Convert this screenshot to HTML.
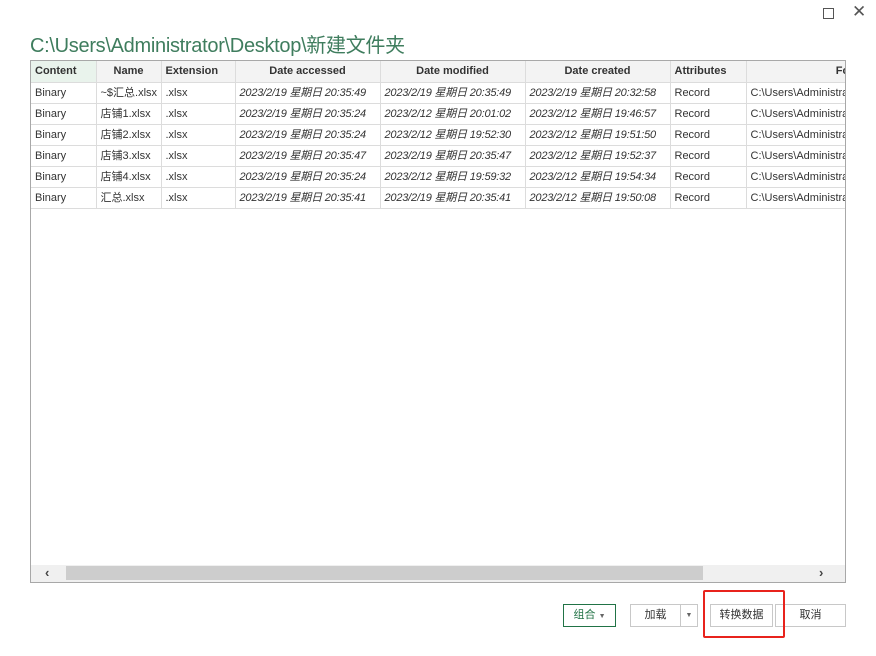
<!DOCTYPE html>
<html><head><meta charset="utf-8"><style>
body{margin:0;width:876px;height:656px;background:#fff;position:relative;overflow:hidden;font-family:"Liberation Sans","Noto Sans CJK SC",sans-serif;}
.t{position:absolute;left:30px;top:29px;font-size:20px;color:#3f7d5e;letter-spacing:-0.3px;white-space:nowrap}
.box{position:absolute;left:30px;top:60px;width:814px;height:521px;border:1px solid #a8a8a8;overflow:hidden}
table{border-collapse:collapse;font-size:11px;color:#333;table-layout:fixed;position:absolute;left:0;top:0;width:955px}
tr{height:21px}
td,th{border:1px solid #dcdcdc;padding:0 4px;white-space:nowrap;overflow:hidden;vertical-align:middle;line-height:20px}
th{background:#f3f3f3;font-weight:bold;text-align:center;border-top:none}
th.l{text-align:left}
td.i{font-style:italic;letter-spacing:-0.2px}
.sb{position:absolute;left:0;bottom:0;width:814px;height:17px;background:#f0f0f0}
.th{position:absolute;left:35px;top:1px;width:637px;height:14px;background:#cdcdcd}
.btn{position:absolute;top:604px;height:21px;border:1px solid #c8c8c8;font-size:11px;color:#333;text-align:center;line-height:21px;background:#fff}
</style></head><body>
<div style="position:absolute;left:823px;top:8px;width:9px;height:9px;border:1px solid #555"></div>
<div style="position:absolute;left:852px;top:2px;font-size:17px;color:#555">✕</div>
<div class="t">C:\Users\Administrator\Desktop\新建文件夹</div>
<div class="box">
<table>
<colgroup><col style="width:65px"><col style="width:65px"><col style="width:74px"><col style="width:145px"><col style="width:145px"><col style="width:145px"><col style="width:76px"><col style="width:240px"></colgroup>
<tr><th class="l" style="background:#e9f3ec;border-left:none">Content</th><th>Name</th><th class="l">Extension</th><th>Date accessed</th><th>Date modified</th><th>Date created</th><th class="l">Attributes</th><th>Folder Path</th></tr>
<tr><td style="border-left:none">Binary</td><td>~$汇总.xlsx</td><td>.xlsx</td><td class="i">2023/2/19 星期日 20:35:49</td><td class="i">2023/2/19 星期日 20:35:49</td><td class="i">2023/2/19 星期日 20:32:58</td><td>Record</td><td>C:\Users\Administrator</td></tr>
<tr><td style="border-left:none">Binary</td><td>店铺1.xlsx</td><td>.xlsx</td><td class="i">2023/2/19 星期日 20:35:24</td><td class="i">2023/2/12 星期日 20:01:02</td><td class="i">2023/2/12 星期日 19:46:57</td><td>Record</td><td>C:\Users\Administrator</td></tr>
<tr><td style="border-left:none">Binary</td><td>店铺2.xlsx</td><td>.xlsx</td><td class="i">2023/2/19 星期日 20:35:24</td><td class="i">2023/2/12 星期日 19:52:30</td><td class="i">2023/2/12 星期日 19:51:50</td><td>Record</td><td>C:\Users\Administrator</td></tr>
<tr><td style="border-left:none">Binary</td><td>店铺3.xlsx</td><td>.xlsx</td><td class="i">2023/2/19 星期日 20:35:47</td><td class="i">2023/2/19 星期日 20:35:47</td><td class="i">2023/2/12 星期日 19:52:37</td><td>Record</td><td>C:\Users\Administrator</td></tr>
<tr><td style="border-left:none">Binary</td><td>店铺4.xlsx</td><td>.xlsx</td><td class="i">2023/2/19 星期日 20:35:24</td><td class="i">2023/2/12 星期日 19:59:32</td><td class="i">2023/2/12 星期日 19:54:34</td><td>Record</td><td>C:\Users\Administrator</td></tr>
<tr><td style="border-left:none">Binary</td><td>汇总.xlsx</td><td>.xlsx</td><td class="i">2023/2/19 星期日 20:35:41</td><td class="i">2023/2/19 星期日 20:35:41</td><td class="i">2023/2/12 星期日 19:50:08</td><td>Record</td><td>C:\Users\Administrator</td></tr>
</table>
<div class="sb"><div class="th"></div>
<div style="position:absolute;left:14px;top:0;font-size:13px;color:#444;font-weight:bold">‹</div>
<div style="position:absolute;left:788px;top:0;font-size:13px;color:#444;font-weight:bold">›</div></div>
</div>
<div class="btn" style="left:563px;width:51px;border-color:#217346;color:#217346">组合 <span style="font-size:7px;color:#666">▼</span></div>
<div class="btn" style="left:630px;width:49px">加载</div>
<div class="btn" style="left:680px;width:16px;font-size:7px;color:#666">▼</div>
<div class="btn" style="left:710px;width:61px">转换数据</div>
<div class="btn" style="left:775px;width:69px">取消</div>
<div style="position:absolute;left:703px;top:590px;width:78px;height:44px;border:2px solid #e8231c;border-radius:2px"></div>
</body></html>
